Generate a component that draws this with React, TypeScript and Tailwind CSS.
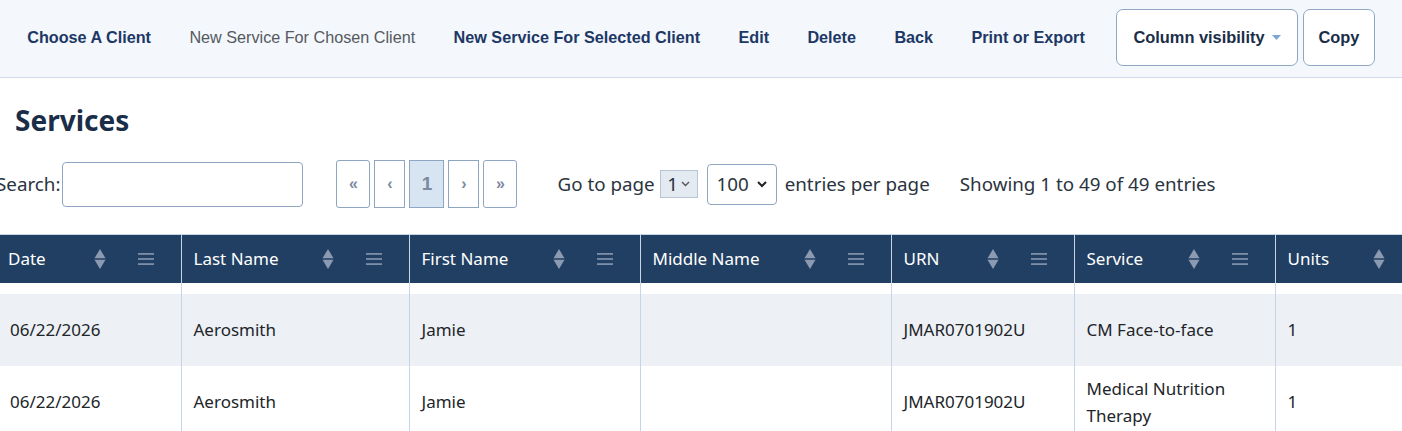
import React from 'react';

const navLinks = [
  { label: 'Choose A Client', bold: true },
  { label: 'New Service For Chosen Client', bold: false },
  { label: 'New Service For Selected Client', bold: true },
  { label: 'Edit', bold: true },
  { label: 'Delete', bold: true },
  { label: 'Back', bold: true },
  { label: 'Print or Export', bold: true },
];

const columns = [
  { label: 'Date', w: 'w-[181px]', pad: 'pl-2', menu: true },
  { label: 'Last Name', w: 'w-[228px]', pad: 'pl-3', menu: true },
  { label: 'First Name', w: 'w-[231px]', pad: 'pl-3', menu: true },
  { label: 'Middle Name', w: 'w-[251px]', pad: 'pl-3', menu: true },
  { label: 'URN', w: 'w-[183px]', pad: 'pl-3', menu: true },
  { label: 'Service', w: 'w-[201px]', pad: 'pl-3', menu: true },
  { label: 'Units', w: 'w-[128px]', pad: 'pl-3', menu: false },
];

const rows = [
  ['06/22/2026', 'Aerosmith', 'Jamie', '', 'JMAR0701902U', 'CM Face-to-face', '1'],
  ['06/22/2026', 'Aerosmith', 'Jamie', '', 'JMAR0701902U', 'Medical Nutrition Therapy', '1'],
];

const SortIcon = () => (
  <svg width="12" height="22" viewBox="0 0 12 22" className="shrink-0">
    <path d="M6 1 L11.5 10.3 L0.5 10.3 Z" fill="#8b9ab0" />
    <path d="M0.5 11.7 L11.5 11.7 L6 21 Z" fill="#8b9ab0" />
  </svg>
);

const MenuIcon = () => (
  <svg width="16" height="14" viewBox="0 0 16 14" className="shrink-0">
    <rect x="0" y="1" width="16" height="1.8" fill="#7d8ea8" />
    <rect x="0" y="6.1" width="16" height="1.8" fill="#7d8ea8" />
    <rect x="0" y="11.2" width="16" height="1.8" fill="#7d8ea8" />
  </svg>
);

export default function App() {
  return (
    <div className="w-[1402px] h-[431px] overflow-hidden bg-white font-['Noto_Sans',sans-serif] text-[#212529]">
      {/* top toolbar */}
      <nav className="h-[78px] pb-[2px] flex items-center bg-[#f4f7fb] border-b border-[#cfdae6] pl-2 font-['Liberation_Sans',Arial,sans-serif] text-[16.2px]">
        {navLinks.map((l) => (
          <span
            key={l.label}
            className={
              l.bold
                ? 'px-[19.2px] font-bold text-[#1d3766]'
                : 'px-[19.2px] text-[#555a60]'
            }
          >
            {l.label}
          </span>
        ))}
        <button className="ml-[12px] h-[57px] w-[182px] flex items-center justify-center gap-[7px] bg-white border border-[#8ea6c2] rounded-[7px] font-bold text-[16.4px] text-[#1a2e48]">
          Column visibility
          <svg width="9" height="5" viewBox="0 0 9 5">
            <path d="M0 0 L9 0 L4.5 5 Z" fill="#7aa7d6" />
          </svg>
        </button>
        <button className="ml-[5px] h-[57px] w-[72px] flex items-center justify-center bg-white border border-[#8ea6c2] rounded-[7px] font-bold text-[16.4px] text-[#1a2e48]">
          Copy
        </button>
      </nav>

      {/* heading */}
      <h1 className="pl-[15px] pt-[24px] text-[28px] leading-[36px] font-bold text-[#1a2e48]">Services</h1>

      {/* controls */}
      <div className="mt-[22px] flex items-center text-[18.8px] text-[#2b3440] ml-[-4px]">
        <label className="flex items-center">
          Search:
          <input className="ml-[2px] w-[241px] h-[45px] border border-[#8ea6c2] rounded-[4px] bg-white" />
        </label>
        <div className="ml-[33px] flex items-center gap-[4px] font-['Liberation_Sans',Arial,sans-serif]">
          <span className="w-[34px] h-[48px] flex items-center justify-center border border-[#8ea6c2] rounded-[3px] text-[#7b8aa0] font-bold text-[16px]">«</span>
          <span className="w-[31px] h-[48px] flex items-center justify-center border border-[#8ea6c2] text-[#7b8aa0] font-bold text-[16px]">‹</span>
          <span className="w-[35px] h-[48px] flex items-center justify-center border border-[#8ea6c2] bg-[#d7e4f2] text-[#7b8aa0] font-bold text-[19px]">1</span>
          <span className="w-[31px] h-[48px] flex items-center justify-center border border-[#8ea6c2] text-[#7b8aa0] font-bold text-[16px]">›</span>
          <span className="w-[34px] h-[48px] flex items-center justify-center border border-[#8ea6c2] rounded-[3px] text-[#7b8aa0] font-bold text-[16px]">»</span>
        </div>
        <span className="ml-[40px]">Go to page</span>
        <span className="ml-[5px] h-[28px] w-[38px] flex items-center justify-center gap-[3px] bg-[#e4eaf1] border border-[#b8c5d4]">
          1
          <svg width="9" height="6" viewBox="0 0 9 6">
            <path d="M1 1 L4.5 4.5 L8 1" stroke="#555" strokeWidth="1.4" fill="none" />
          </svg>
        </span>
        <span className="ml-[9px] h-[41px] w-[70px] flex items-center justify-center gap-[8px] border border-[#8ea6c2] rounded-[4px]">
          100
          <svg width="10" height="7" viewBox="0 0 10 7">
            <path d="M1 1 L5 5 L9 1" stroke="#222" strokeWidth="2" fill="none" />
          </svg>
        </span>
        <span className="ml-[8px]">entries per page</span>
        <span className="ml-[30px]">Showing 1 to 49 of 49 entries</span>
      </div>

      {/* table */}
      <table className="mt-[26px] table-fixed border-collapse text-[17px] w-[1403px]">
        <thead>
          <tr className="bg-[#213f63] text-white h-[48px] border-t border-[#c6d5e6]">
            {columns.map((c, i) => (
              <th
                key={c.label}
                className={`${c.w} ${c.pad} font-normal text-left ${i > 0 ? 'border-l border-[#c6d5e6]' : ''}`}
              >
                <div className="flex items-center">
                  <span>{c.label}</span>
                  <span className="flex-1" />
                  <SortIcon />
                  {c.menu ? (
                    <span className="ml-[32px] mr-[27px]">
                      <MenuIcon />
                    </span>
                  ) : (
                    <span className="mr-[18px]" />
                  )}
                </div>
              </th>
            ))}
          </tr>
        </thead>
        <tbody>
          <tr className="h-[11px]">
            {columns.map((c, i) => (
              <td key={c.label} className={i > 0 ? 'border-l border-[#c6d5e6]' : ''} />
            ))}
          </tr>
          {rows.map((r, ri) => (
            <tr key={ri} className={ri % 2 === 0 ? 'bg-[#edf0f5] h-[72px]' : 'bg-white h-[72px]'}>
              {r.map((v, ci) => (
                <td
                  key={ci}
                  className={`${ci === 0 ? 'pl-[10px]' : 'pl-[12px] border-l border-[#c6d5e6]'} pr-3 align-middle leading-[27px]`}
                >
                  {v}
                </td>
              ))}
            </tr>
          ))}
        </tbody>
      </table>
    </div>
  );
}
